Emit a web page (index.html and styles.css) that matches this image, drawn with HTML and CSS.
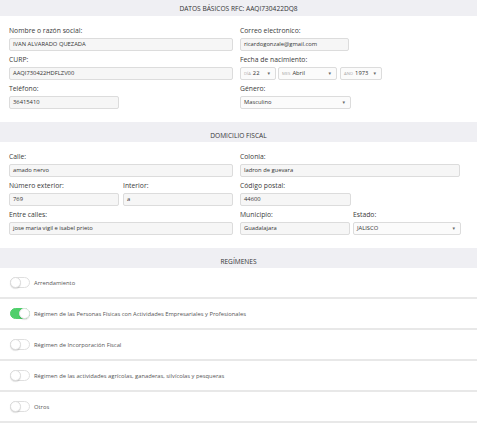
FILE: index.html
```html
<!DOCTYPE html>
<html lang="es">
<head>
<meta charset="utf-8">
<title>Datos</title>
<link rel="stylesheet" href="styles.css">
</head>
<body>
<div class="sec-head first">DATOS BÁSICOS RFC: AAQI730422DQ8</div>
<div class="sec-body">
  <div class="col">
    <div class="field"><div class="lbl">Nombre o razón social:</div><div class="inp">IVAN ALVARADO QUEZADA</div></div>
    <div class="field"><div class="lbl">CURP:</div><div class="inp">AAQI730422HDFLZV00</div></div>
    <div class="field"><div class="lbl">Teléfono:</div><div class="inp w110">36415410</div></div>
  </div>
  <div class="col">
    <div class="field"><div class="lbl">Correo electronico:</div><div class="inp w109">ricardogonzale@gmail.com</div></div>
    <div class="field"><div class="lbl">Fecha de nacimiento:</div>
      <div class="dates">
        <div class="sel d-dia"><span><span class="ph">DÍA</span>22</span><span class="caret">▾</span></div>
        <div class="sel d-mes"><span><span class="ph">MES</span>Abril</span><span class="caret">▾</span></div>
        <div class="sel d-ano"><span><span class="ph">AÑO</span>1973</span><span class="caret">▾</span></div>
      </div>
    </div>
    <div class="field"><div class="lbl">Género:</div><div class="sel w111"><span>Masculino</span><span class="caret">▾</span></div></div>
  </div>
</div>

<div class="sec-head">DOMICILIO FISCAL</div>
<div class="sec-body">
  <div class="col">
    <div class="field"><div class="lbl">Calle:</div><div class="inp">amado nervo</div></div>
    <div class="split">
      <div class="field"><div class="lbl">Número exterior:</div><div class="inp">769</div></div>
      <div class="field"><div class="lbl">Interior:</div><div class="inp">a</div></div>
    </div>
    <div class="field"><div class="lbl">Entre calles:</div><div class="inp">jose maria vigil e isabel prieto</div></div>
  </div>
  <div class="col">
    <div class="field"><div class="lbl">Colonia:</div><div class="inp">ladron de guevara</div></div>
    <div class="field"><div class="lbl">Código postal:</div><div class="inp w111">44600</div></div>
    <div class="split2">
      <div class="field"><div class="lbl">Municipio:</div><div class="inp">Guadalajara</div></div>
      <div class="field"><div class="lbl">Estado:</div><div class="sel"><span>JALISCO</span><span class="caret">▾</span></div></div>
    </div>
  </div>
</div>

<div class="sec-head">REGÍMENES</div>
<div class="regs">
  <div class="reg"><span class="tog"></span><span class="rtxt">Arrendamiento</span></div>
  <div class="reg"><span class="tog on"></span><span class="rtxt">Régimen de las Personas Físicas con Actividades Empresariales y Profesionales</span></div>
  <div class="reg"><span class="tog"></span><span class="rtxt">Régimen de Incorporación Fiscal</span></div>
  <div class="reg"><span class="tog"></span><span class="rtxt">Régimen de las actividades agrícolas, ganaderas, silvícolas y pesqueras</span></div>
  <div class="reg"><span class="tog"></span><span class="rtxt">Otros</span></div>
</div>
</body>
</html>
```
FILE: styles.css
```css
html, body {
  margin: 0;
  padding: 0;
  background: #ffffff;
}
body {
  font-family: "Open Sans", "DejaVu Sans", sans-serif;
  color: #333333;
  width: 477px;
  overflow: hidden;
}
.sec-head {
  background: #efeff3;
  text-align: center;
  font-size: 6.6px;
  line-height: 10px;
  height: 20px;
  box-sizing: border-box;
  padding-top: 9px;
  color: #333;
}
.sec-head.first {
  height: 16px;
  padding-top: 4px;
}
.sec-body {
  display: grid;
  grid-template-columns: 224px 220px;
  column-gap: 7px;
  padding: 10px 0 9px 9px;
}
.col {
  display: flex;
  flex-direction: column;
}
.field {
  display: flex;
  flex-direction: column;
  margin-bottom: 4px;
}
.lbl {
  font-size: 6.8px;
  line-height: 10px;
  margin-bottom: 2px;
  color: #3a3a3a;
}
.inp, .sel {
  height: 13px;
  box-sizing: border-box;
  background: #f6f6f6;
  border: 1px solid #dcdcdc;
  border-radius: 2px;
  font-size: 5.8px;
  line-height: 11px;
  padding: 0 3px;
  color: #333;
  white-space: nowrap;
  overflow: hidden;
}
.sel {
  display: flex;
  justify-content: space-between;
  background: #fbfbfb;
}
.caret {
  font-size: 5px;
  color: #666;
  padding-right: 2px;
}
.ph {
  font-size: 4.2px;
  color: #aaa;
  margin-right: 2px;
}
.w110 { width: 110px; }
.w109 { width: 109px; }
.w111 { width: 111px; }
.dates {
  display: flex;
  gap: 2px;
}
.d-dia { width: 36px; }
.d-mes { width: 59px; }
.d-ano { width: 42px; margin-left: 1px; }
.split {
  display: grid;
  grid-template-columns: 110px 110px;
  column-gap: 4px;
}
.split2 {
  display: grid;
  grid-template-columns: 110px 108px;
  column-gap: 3px;
}
.regs {
  display: flex;
  flex-direction: column;
}
.reg {
  height: 31px;
  box-sizing: border-box;
  border-bottom: 2px solid #e8e8e8;
  display: flex;
  align-items: center;
  padding-left: 10px;
}
.tog {
  position: relative;
  width: 20px;
  height: 11px;
  box-sizing: border-box;
  border: 1px solid #dfdfdf;
  border-radius: 6px;
  background: #ffffff;
  margin-right: 4px;
  flex: none;
}
.tog::after {
  content: "";
  position: absolute;
  left: -1px;
  top: -1px;
  width: 11px;
  height: 11px;
  box-sizing: border-box;
  border-radius: 50%;
  background: #fff;
  border: 1px solid #dcdcdc;
  box-shadow: 0 1px 1px rgba(0,0,0,0.12);
}
.tog.on {
  background: #4fcf6b;
  border-color: #4fcf6b;
}
.tog.on::after {
  left: auto;
  right: -1px;
  border-color: #e6e6e6;
}
.rtxt {
  font-size: 5.8px;
  color: #555;
}
```
